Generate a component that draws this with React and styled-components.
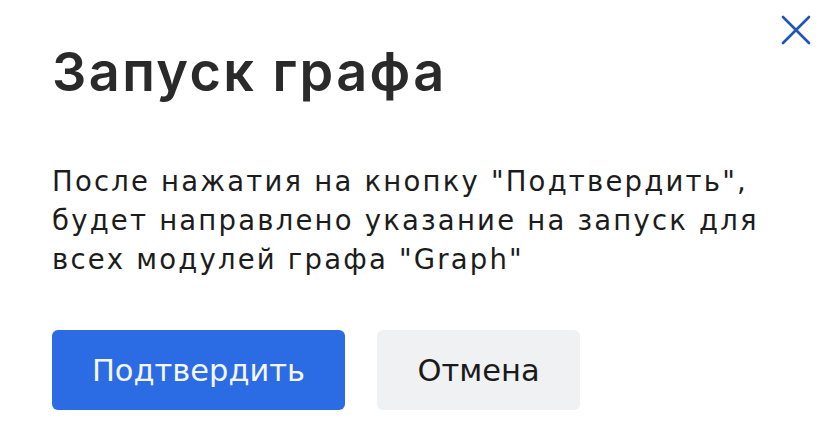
import React from "react";
import styled, { createGlobalStyle } from "styled-components";

const GlobalStyle = createGlobalStyle`
  html, body {
    margin: 0;
    padding: 0;
    background: #ffffff;
  }
`;

const Dialog = styled.div`
  position: relative;
  width: 836px;
  height: 436px;
  box-sizing: border-box;
  padding: 39px 52px 0 52px;
  background: #ffffff;
`;

const CloseButton = styled.button`
  position: absolute;
  top: 14px;
  right: 24px;
  width: 32px;
  height: 32px;
  padding: 0;
  border: none;
  background: transparent;
  display: flex;
  align-items: center;
  justify-content: center;
  cursor: pointer;
`;

const Title = styled.h1`
  margin: 0;
  font-family: "Inter", "Liberation Sans", sans-serif;
  font-weight: 600;
  font-size: 54px;
  line-height: 66px;
  letter-spacing: 2.4px;
  color: #2a2a2a;
`;

const Message = styled.p`
  margin: 57px 0 0 0;
  font-family: "DejaVu Sans", sans-serif;
  font-size: 27.5px;
  line-height: 39px;
  letter-spacing: 2.2px;
  color: #1c1c1c;
  max-width: 730px;
`;

const Actions = styled.div`
  display: flex;
  gap: 32px;
  margin-top: 51px;
`;

const Button = styled.button`
  height: 80px;
  width: ${(p) => p.$width}px;
  padding: 0;
  border: none;
  border-radius: 6px;
  font-family: "DejaVu Sans", sans-serif;
  font-size: 30.5px;
  background: ${(p) => (p.$primary ? "#2b6be3" : "#f0f1f3")};
  color: ${(p) => (p.$primary ? "#f4f7fd" : "#1a1a1a")};
  cursor: pointer;
`;

export default function App() {
  return (
    <>
      <GlobalStyle />
      <Dialog>
        <CloseButton aria-label="Закрыть">
          <svg width="30" height="30" viewBox="0 0 30 30">
            <path
              d="M2 2 L28 28 M28 2 L2 28"
              stroke="#1d55b8"
              strokeWidth="2.6"
              strokeLinecap="round"
            />
          </svg>
        </CloseButton>
        <Title>Запуск графа</Title>
        <Message>
          После нажатия на кнопку "Подтвердить", будет направлено указание на
          запуск для всех модулей графа "Graph"
        </Message>
        <Actions>
          <Button $primary $width={293}>
            Подтвердить
          </Button>
          <Button $width={203}>Отмена</Button>
        </Actions>
      </Dialog>
    </>
  );
}
